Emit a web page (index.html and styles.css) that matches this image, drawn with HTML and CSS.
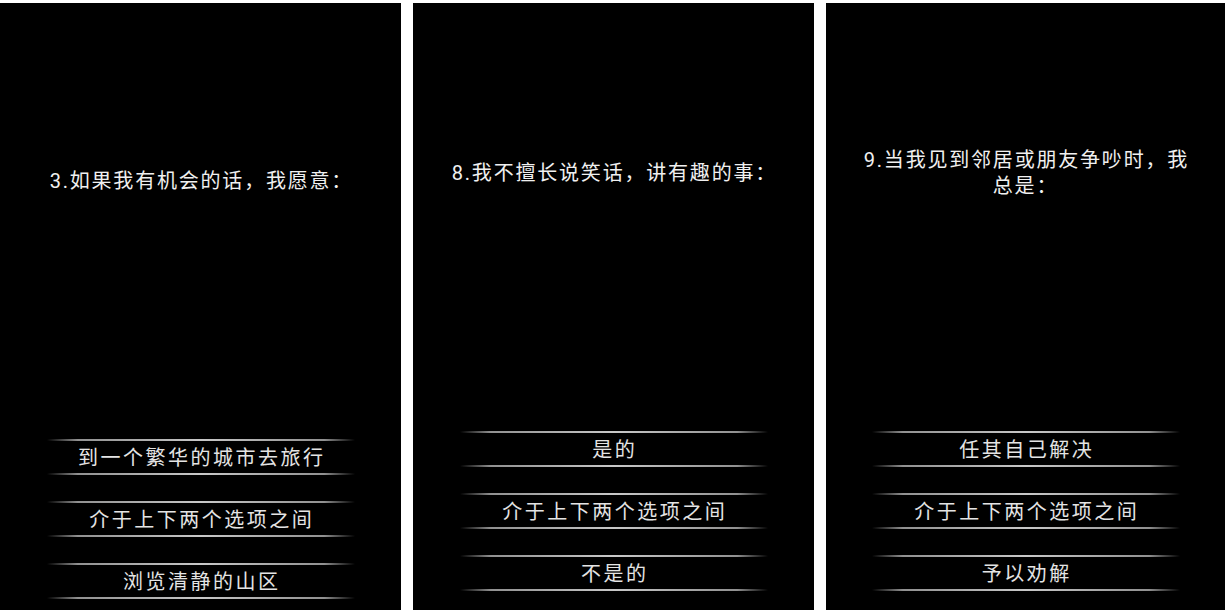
FILE: index.html
```html
<!DOCTYPE html>
<html lang="zh-CN">
<head>
<meta charset="utf-8">
<title>测试题</title>
<link rel="stylesheet" href="styles.css">
</head>
<body>
<main class="screens">
  <section class="screen screen--low">
    <div class="question"><p>3.如果我有机会的话，我愿意：</p></div>
    <ul class="options">
      <li class="option">到一个繁华的城市去旅行</li>
      <li class="option">介于上下两个选项之间</li>
      <li class="option">浏览清静的山区</li>
    </ul>
  </section>
  <section class="screen">
    <div class="question"><p>8.我不擅长说笑话，讲有趣的事：</p></div>
    <ul class="options">
      <li class="option">是的</li>
      <li class="option">介于上下两个选项之间</li>
      <li class="option">不是的</li>
    </ul>
  </section>
  <section class="screen">
    <div class="question"><p>9.当我见到邻居或朋友争吵时，我总是：</p></div>
    <ul class="options">
      <li class="option">任其自己解决</li>
      <li class="option">介于上下两个选项之间</li>
      <li class="option">予以劝解</li>
    </ul>
  </section>
</main>
</body>
</html>
```

FILE: styles.css
```css
html, body {
  margin: 0;
  padding: 0;
  background: #ffffff;
  height: 610px;
  overflow: hidden;
}

.screens {
  display: grid;
  grid-template-columns: 401px 401px 1fr;
  column-gap: 12px;
  padding-top: 3px;
  height: 607px;
}

.screen {
  background: #000000;
  display: flex;
  flex-direction: column;
  font-family: Roboto, "Noto Sans CJK SC", sans-serif;
  color: #f0f0f0;
}

.screen--low {
  padding-top: 8px;
}

.question {
  flex: 0 0 340px;
  display: flex;
  align-items: center;
  justify-content: center;
  padding: 0 28px;
}

.question p {
  margin: 0;
  font-size: 20px;
  line-height: 26px;
  letter-spacing: 1.8px;
  text-indent: 1.8px;
  text-align: center;
}

.options {
  list-style: none;
  margin: 88px 0 0;
  padding: 0;
  display: flex;
  flex-direction: column;
  align-items: center;
  gap: 26px;
}

.option {
  width: 308px;
  display: flex;
  flex-direction: column;
  align-items: center;
  font-size: 20px;
  line-height: 29px;
  padding-top: 0;
  letter-spacing: 2.5px;
  text-indent: 2.5px;
  color: #e4e4e4;
}

.option::before {
  margin-bottom: 3px;
}

.option::before,
.option::after {
  content: "";
  display: block;
  width: 100%;
  height: 2px;
  background: linear-gradient(to right, rgba(170,170,170,0) 0%, rgba(170,170,170,0.85) 10%, #c8c8c8 50%, rgba(170,170,170,0.85) 90%, rgba(170,170,170,0) 100%);
}
```
